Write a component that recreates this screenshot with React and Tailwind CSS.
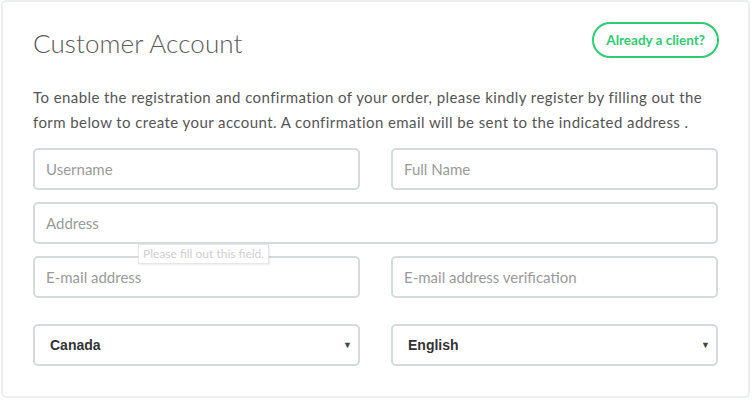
import { useState } from "react";

const inputCls =
  "w-full h-[42px] rounded-[5px] border-2 border-[#d5dadd] bg-white px-[11px] text-[15px] text-[#555] placeholder:text-[#9a9a9a] outline-none";

const selectCls =
  "w-full h-[42px] rounded-[5px] border-2 border-[#d5dadd] bg-white pl-[15px] pr-8 text-[14px] font-bold text-[#333] appearance-none outline-none font-['Liberation_Sans',sans-serif]";

const Select = ({ value, options }) => {
  const [val, setVal] = useState(value);
  return (
    <div className="relative">
      <select value={val} onChange={(e) => setVal(e.target.value)} className={selectCls}>
        {options.map((o) => (
          <option key={o}>{o}</option>
        ))}
      </select>
      <span className="pointer-events-none absolute right-[8px] top-1/2 -translate-y-1/2 text-[9px] text-[#444]">▼</span>
    </div>
  );
};

export default function App() {
  return (
    <div className="bg-white w-[754px] h-[402px] font-['Lato',sans-serif]">
      <div className="ml-px mr-[4px] h-[398px] rounded-[5px] border-2 border-[#eceeef] px-[30px] pt-[20px]">
        <div className="flex items-start justify-between">
          <h1 className="mt-[2px] text-[26px] font-light text-[#5a5a5a] tracking-[0.1px]">Customer Account</h1>
          <button className="mr-[-1px] h-[36px] rounded-full border-2 border-[#2ecc71] px-[12px] text-[13.5px] font-bold text-[#2ecc71]">
            Already a client?
          </button>
        </div>

        {/* Intro text */}
        <p className="mt-[22px] text-[15px] leading-[25px] text-[#555] tracking-[0.42px]">
          To enable the registration and confirmation of your order, please kindly register by filling out the
          form below to create your account. A confirmation email will be sent to the indicated address .
        </p>

        <form className="mt-[13px] flex flex-col gap-[12px]">
          <div className="grid grid-cols-2 gap-[31px]">
            <input className={inputCls} placeholder="Username" />
            <input className={inputCls} placeholder="Full Name" />
          </div>
          <div className="relative">
            <input className={inputCls} placeholder="Address" />
            <div className="absolute left-[105px] top-[42px] border border-[#e6e6e6] bg-white px-[4px] py-[2px] text-[12px] leading-[14px] text-[#cfcfcf] shadow-[1px_1px_2px_rgba(0,0,0,0.08)]">
              Please fill out this field.
            </div>
          </div>
          <div className="grid grid-cols-2 gap-[31px]">
            <input className={inputCls} placeholder="E-mail address" />
            <input className={inputCls} placeholder="E-mail address verification" />
          </div>
          <div className="mt-[14px] grid grid-cols-2 gap-[31px]">
            <Select value="Canada" options={["Canada", "United States", "France"]} />
            <Select value="English" options={["English", "Français"]} />
          </div>
        </form>
      </div>
    </div>
  );
}
